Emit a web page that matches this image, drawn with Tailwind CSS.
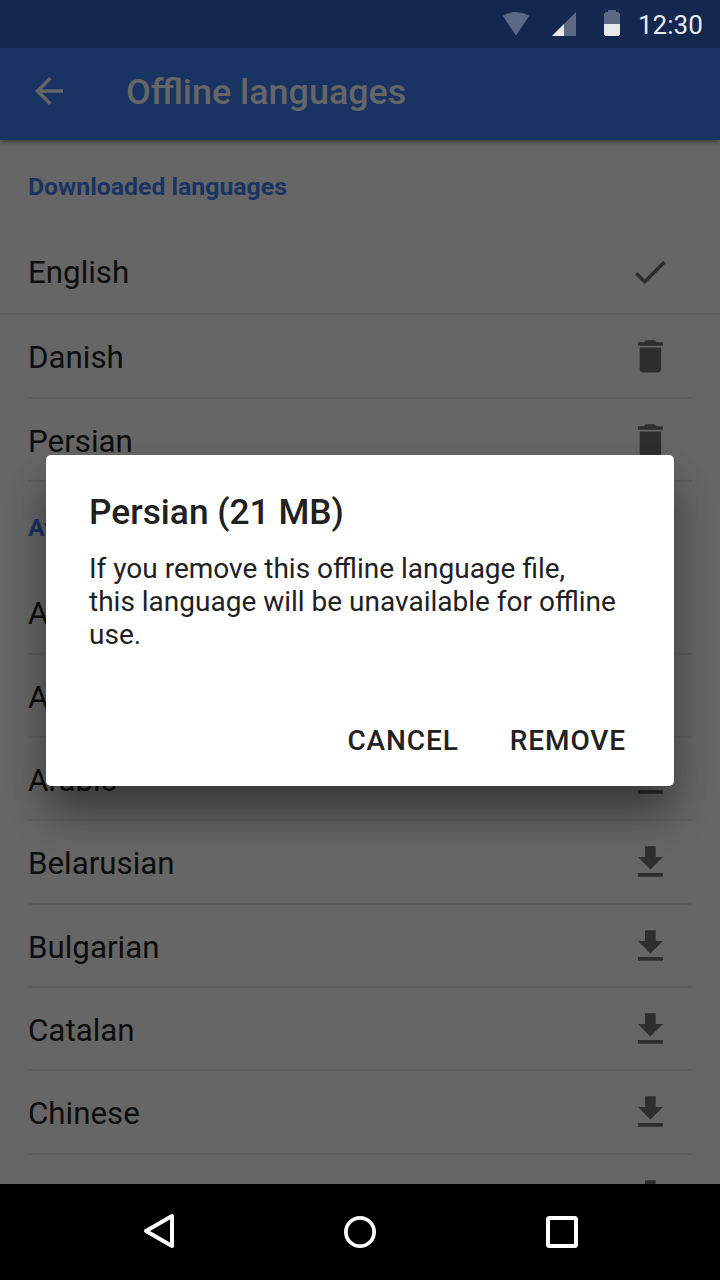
<!DOCTYPE html>
<html lang="en">
<head>
<meta charset="utf-8">
<title>Offline languages</title>
<script src="https://cdn.jsdelivr.net/npm/@tailwindcss/browser@4"></script>
</head>
<body class="font-[Roboto,sans-serif]">
<svg class="hidden">
  <symbol id="trash" viewBox="0 0 24 24"><path d="M6 19c0 1.100.9 2 2 2h8c1.100 0 2-.9 2-2V7H6v12zM19 4h-3.500l-1-1h-5l-1 1H5v2h14V4z"/></symbol>
  <symbol id="download" viewBox="0 0 24 24"><path d="M19 9h-4V3H9v6H5l7 7 7-7zM5 18v2h14v-2H5z"/></symbol>
</svg>
<div class="relative flex h-[1280px] w-[720px] flex-col overflow-hidden bg-[#666666] text-[#0d0d0d]">
  <div class="flex h-12 shrink-0 items-center bg-[#14284f] pl-[502px] text-[#e8eaed]">
    <svg class="h-6 w-7" viewBox="0 0 28 24"><path d="M.700 3.800Q14-3.600 27.300 3.800L14 23.500Z" fill="#5b6984"/></svg>
    <svg class="ml-[22px] h-6 w-6" viewBox="0 0 24 24"><path d="M24 0V24H0Z" fill="#5b6984"/><path d="M12 12V24H0Z" fill="#e8eaed"/></svg>
    <svg class="-mt-0.5 ml-7 h-[26px] w-4" viewBox="0 0 16 26"><path d="M4 0h8v2h2.500L16 3.500V14H0V3.500L1.500 2H4Z" fill="#5b6984"/><path d="M0 14h16v10.500L14.500 26h-13L0 24.500Z" fill="#e8eaed"/></svg>
    <span class="mt-0.5 ml-[18px] text-[26px] leading-8">12:30</span>
  </div>
  <header class="z-10 flex h-[92px] shrink-0 items-center bg-[#193462] pl-[28px] text-[#666666] shadow-[0_3px_4px_-1px_rgba(0,0,0,0.4)]">
    <svg class="-mt-1.5 size-[42px]" viewBox="0 0 24 24" fill="currentColor"><path d="M20 11H7.830l5.590-5.590L12 4l-8 8 8 8 1.410-1.410L7.830 13H20v-2z"/></svg>
    <h1 class="-mt-1 ml-14 text-[35.9px] leading-10 font-medium">Offline languages</h1>
  </header>
  <main class="flex-1 overflow-hidden">
    <h2 class="flex h-[92px] items-center pt-0.5 pl-7 text-[24.8px] font-bold text-[#193462]">Downloaded languages</h2>
    <div class="flex h-[83.33px] items-center justify-between border-b-2 border-[#5f5f5f] pr-[49px] pl-7 text-[31.3px]"><span class="pt-0.5">English</span>
      <svg class="mb-0.5 size-[42px]" viewBox="0 0 24 24" fill="#2e2e2e"><path d="M9 16.170L4.830 12l-1.420 1.410L9 19 21 7l-1.410-1.410z"/></svg></div>
    <ul class="mx-7 text-[31.3px]">
      <li class="flex h-[83.33px] items-center justify-between border-b-2 border-[#5f5f5f] pt-px pr-5"><span class="pt-1">Danish</span><svg class="size-[42.800px]" fill="#2e2e2e"><use href="#trash"/></svg></li>
      <li class="flex h-[83.33px] items-center justify-between border-b-2 border-[#5f5f5f] pt-0.5 pr-5"><span class="pt-1">Persian</span><svg class="size-[42.800px]" fill="#2e2e2e"><use href="#trash"/></svg></li>
    </ul>
    <h2 class="flex h-[89.33px] items-center pt-0.5 pl-7 text-[24.8px] font-bold text-[#193462]">Available languages</h2>
    <ul class="mx-7 text-[31.3px]">
      <li class="flex h-[83.33px] items-center justify-between border-b-2 border-[#5f5f5f] pt-[1.5px] pr-5"><span class="pt-1">Afrikaans</span><svg class="size-[42.800px]" fill="#2e2e2e"><use href="#download"/></svg></li>
      <li class="flex h-[83.33px] items-center justify-between border-b-2 border-[#5f5f5f] pt-[1.5px] pr-5"><span class="pt-1">Albanian</span><svg class="size-[42.800px]" fill="#2e2e2e"><use href="#download"/></svg></li>
      <li class="flex h-[83.33px] items-center justify-between border-b-2 border-[#5f5f5f] pt-[1.5px] pr-5"><span class="pt-1">Arabic</span><svg class="size-[42.800px]" fill="#2e2e2e"><use href="#download"/></svg></li>
      <li class="flex h-[83.33px] items-center justify-between border-b-2 border-[#5f5f5f] pt-[1.5px] pr-5"><span class="pt-1">Belarusian</span><svg class="size-[42.800px]" fill="#2e2e2e"><use href="#download"/></svg></li>
      <li class="flex h-[83.33px] items-center justify-between border-b-2 border-[#5f5f5f] pt-[1.5px] pr-5"><span class="pt-1">Bulgarian</span><svg class="size-[42.800px]" fill="#2e2e2e"><use href="#download"/></svg></li>
      <li class="flex h-[83.33px] items-center justify-between border-b-2 border-[#5f5f5f] pt-[1.5px] pr-5"><span class="pt-1">Catalan</span><svg class="size-[42.800px]" fill="#2e2e2e"><use href="#download"/></svg></li>
      <li class="flex h-[83.33px] items-center justify-between border-b-2 border-[#5f5f5f] pt-[1.5px] pr-5"><span class="pt-1">Chinese</span><svg class="size-[42.800px]" fill="#2e2e2e"><use href="#download"/></svg></li>
      <li class="flex h-[83.33px] items-center justify-end pr-5"><svg class="size-[42.800px]" fill="#2e2e2e"><use href="#download"/></svg></li>
    </ul>
  </main>
  <nav class="z-20 flex h-24 shrink-0 items-center bg-black pl-[143px]">
    <svg class="-mt-0.5 h-9 w-8" viewBox="0 0 32 36" fill="none" stroke="#fff" stroke-width="4" stroke-linejoin="round"><path d="M29 3V33L3 18Z"/></svg>
    <svg class="ml-[169px] size-8" viewBox="0 0 32 32" fill="none" stroke="#fff" stroke-width="3.700"><circle cx="16" cy="16" r="14.150"/></svg>
    <svg class="ml-[170px] size-8" viewBox="0 0 32 32" fill="none" stroke="#fff" stroke-width="4"><rect x="2" y="2" width="28" height="28" rx="1.500"/></svg>
  </nav>
  <div role="dialog" class="absolute top-[455px] left-[46px] z-10 flex h-[331px] w-[628px] flex-col rounded-[5px] bg-white px-[43px] pt-[37px] text-[#212121] shadow-[0_30px_38px_rgba(0,0,0,0.3),0_20px_40px_-8px_rgba(0,0,0,0.22)]">
    <h3 class="text-[35.3px] leading-10 font-medium">Persian (21 MB)</h3>
    <p class="mt-[20px] text-[28px] leading-[33px] whitespace-nowrap">If you remove this offline language file,<br>this language will be unavailable for offline<br>use.</p>
    <div class="mt-[72px] flex justify-end gap-[51px] pr-[5px] text-[28px] leading-9 font-medium tracking-[0.9px]"><button>CANCEL</button><button>REMOVE</button></div>
  </div>
</div>
</body>
</html>
